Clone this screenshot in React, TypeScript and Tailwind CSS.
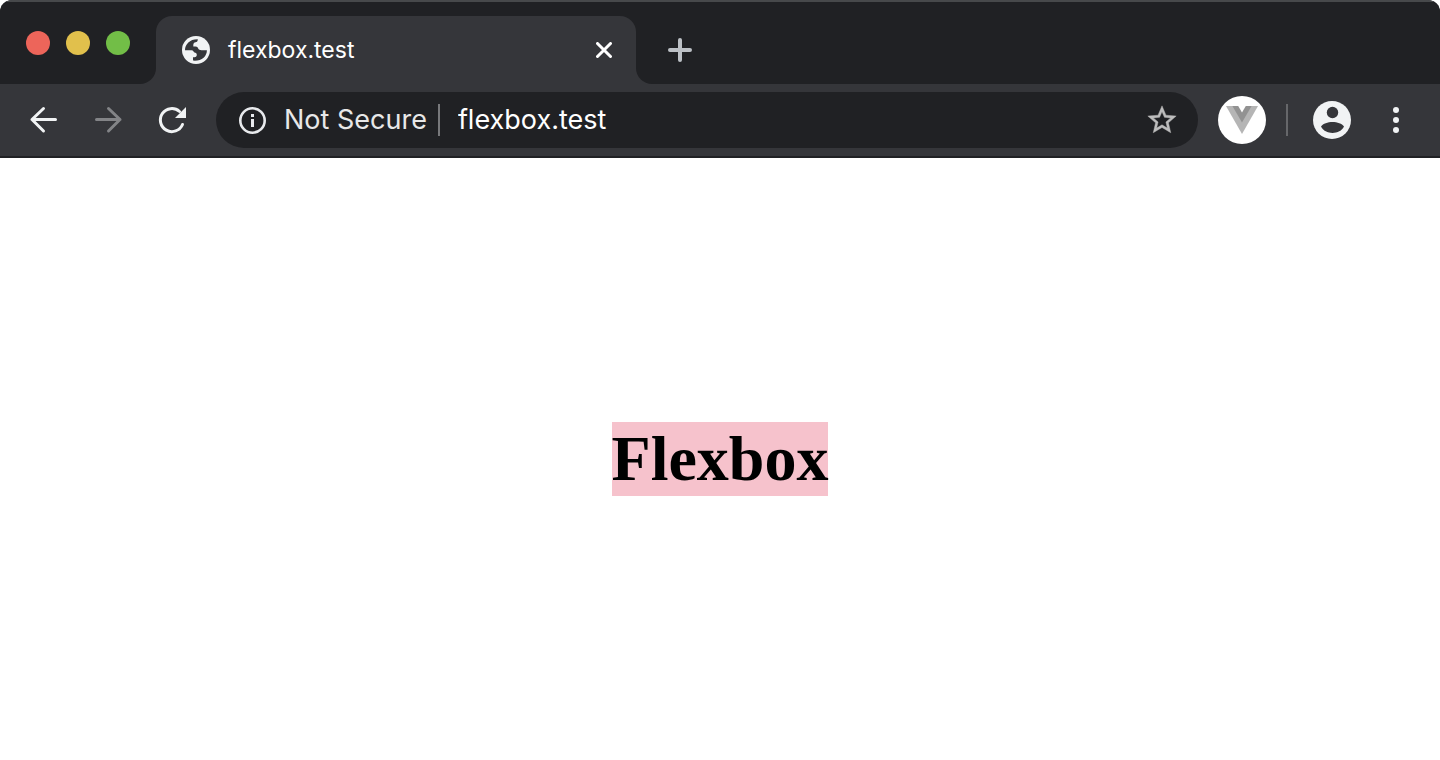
import React from "react";

const ui = "font-['Inter','Liberation_Sans',sans-serif]";

function TabStrip() {
  return (
    <div className="flex h-[84px]">
      <div className="w-[156px] shrink-0 rounded-br-2xl border-t-2 border-[#47494b] bg-[#202124] pl-[26px] pt-[29px]">
        <div className="flex gap-4">
          <button aria-label="Close window" className="size-6 rounded-full bg-[#ed655a]" />
          <button aria-label="Minimize window" className="size-6 rounded-full bg-[#e1c04c]" />
          <button aria-label="Zoom window" className="size-6 rounded-full bg-[#72be47]" />
        </div>
      </div>
      <div className="w-[480px] border-t-2 border-[#47494b] bg-[#202124] pt-3.5">
        <div className="flex h-[68px] items-center rounded-t-2xl bg-[#35363a] pl-[26px] pr-5">
          <svg viewBox="0 0 28 28" className="size-7 shrink-0">
            <circle cx="14" cy="14" r="14" fill="#f1f3f4" />
            <path fill="#35363a" d="M3 14.300C3 8 8 3 15.800 3.200C15.800 5.300 15 6 13.500 6.300C12 6.600 11.300 7.500 11.300 9V10.500H13.500C15.500 10.500 15.800 11.500 16.200 12.500C16.700 13.700 17.800 14.200 19.500 14.200H24.900C24.900 20.500 19.500 25.300 11 24.600V21.300H12.500C14 21.300 14.800 20.300 14.800 18.800C14.800 16.800 13.500 17 12.500 16.500C11.500 16 11.500 14.300 9.500 14.300Z" />
          </svg>
          <span className={`ml-[18px] flex-1 text-[23px] leading-7 text-white ${ui}`}>flexbox.test</span>
          <button aria-label="Close tab" className="p-1">
            <svg viewBox="0 0 16 16" className="size-4" stroke="#fff" strokeWidth="3" strokeLinecap="round">
              <path d="M1.500 1.500L14.500 14.500M14.500 1.500L1.500 14.500" />
            </svg>
          </button>
        </div>
      </div>
      <div className="flex flex-1 items-center rounded-bl-2xl border-t-2 border-[#47494b] bg-[#202124] pl-8 pt-3.5">
        <button aria-label="New tab">
          <svg viewBox="0 0 24 24" className="size-6" stroke="#bdc1c6" strokeWidth="4" strokeLinecap="round">
            <path d="M12 2V22M2 12H22" />
          </svg>
        </button>
      </div>
    </div>
  );
}

function Toolbar() {
  return (
    <div className="flex h-[74px] items-center border-b-2 border-[#202124] pr-7">
      <div className="flex w-[216px] shrink-0 gap-8 pl-7">
        <button aria-label="Back">
          <svg viewBox="0 0 32 32" className="size-8" fill="none" stroke="#f1f3f4" strokeWidth="3" strokeLinecap="round" strokeLinejoin="round">
            <path d="M15.500 4.500L4 15.500L15.500 27M4 15.500H27.500" />
          </svg>
        </button>
        <button aria-label="Forward">
          <svg viewBox="0 0 32 32" className="size-8" fill="none" stroke="#838487" strokeWidth="3" strokeLinecap="round" strokeLinejoin="round">
            <path d="M16.500 4.500L28 15.500L16.500 27M28 15.500H4.500" />
          </svg>
        </button>
        <button aria-label="Reload">
          <svg viewBox="0 0 32 32" className="size-8" fill="none">
            <path d="M26.500 20.500A11.500 11.500 0 1 1 23.500 7.500" stroke="#f1f3f4" strokeWidth="3" strokeLinecap="round" />
            <path d="M30 3V14H19Z" fill="#f1f3f4" />
          </svg>
        </button>
      </div>
      <div className={`flex h-14 flex-1 items-center rounded-full bg-[#202124] pl-[22px] pr-[19px] text-[27px] leading-8 ${ui}`}>
        <svg viewBox="0 0 28 28" className="size-7 shrink-0" fill="none">
          <circle cx="14.500" cy="14.500" r="12.200" stroke="#e8eaed" strokeWidth="2.600" />
          <path d="M13 8h3v3h-3zM13 13h3v8h-3z" fill="#e8eaed" />
        </svg>
        <label htmlFor="address" className="ml-[18px] whitespace-nowrap text-[#e8e8e8]">Not Secure</label>
        <span className="ml-[11px] h-8 w-0.5 bg-[#77787b]" />
        <input id="address" defaultValue="flexbox.test" className="ml-[18px] min-w-0 flex-1 bg-transparent text-white outline-none" />
        <button aria-label="Bookmark this page">
          <svg viewBox="0 0 24 24" className="size-[34px]" fill="#bdbdbd" stroke="#bdbdbd" strokeWidth="0.3">
            <path d="M22 9.240l-7.190-.620L12 2 9.190 8.630 2 9.240l5.460 4.730L5.820 21 12 17.270 18.180 21l-1.630-7.030L22 9.240zM12 15.400l-3.760 2.270 1-4.280-3.320-2.880 4.380-.380L12 6.100l1.710 4.040 4.380.380-3.320 2.880 1 4.280L12 15.400z" />
          </svg>
        </button>
      </div>
      <button aria-label="Vue devtools" className="ml-5 flex size-12 items-center justify-center rounded-full bg-white">
        <svg viewBox="0 0 32 28" className="h-7 w-8">
          <path d="M0 0H32L16 28Z" fill="#b5b5b5" />
          <path d="M6.400 0H25.600L16 16.600Z" fill="#929292" />
          <path d="M12.200 0H19.800L16 6.400Z" fill="#fff" />
        </svg>
      </button>
      <span className="ml-5 h-8 w-0.5 bg-[#66676a]" />
      <button aria-label="Profile" className="ml-[25px]">
        <svg viewBox="0 0 38 38" className="size-[38px]">
          <circle cx="19" cy="19" r="19" fill="#f1f3f4" />
          <circle cx="19.500" cy="11.500" r="5.700" fill="#35363a" />
          <path d="M8 25.500C12 19.500 27 19.500 31 25.500C27 34 12 34 8 25.500Z" fill="#35363a" />
        </svg>
      </button>
      <button aria-label="Menu" className="ml-[29px]">
        <svg viewBox="0 0 32 32" className="size-8" fill="#f1f3f4">
          <circle cx="16" cy="6" r="3" />
          <circle cx="16" cy="16" r="3" />
          <circle cx="16" cy="26" r="3" />
        </svg>
      </button>
    </div>
  );
}

export default function App() {
  return (
    <div className="flex min-h-screen flex-col bg-white">
      <header className="overflow-hidden rounded-t-xl bg-[#35363a]">
        <TabStrip />
        <Toolbar />
      </header>
      <main className="flex flex-1 items-center justify-center">
        <h1 className="bg-[#f6c2cc] font-['Liberation_Serif',serif] text-[64px] font-bold leading-[74px] text-black">Flexbox</h1>
      </main>
    </div>
  );
}
